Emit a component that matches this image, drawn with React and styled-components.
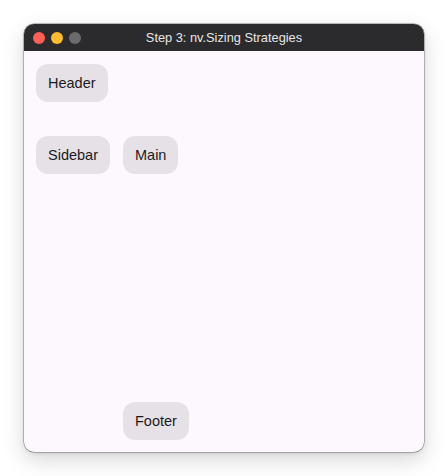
import React from "react";
import styled, { createGlobalStyle } from "styled-components";

const Global = createGlobalStyle`
  html, body { margin: 0; padding: 0; background: #ffffff; }
  body { font-family: "Liberation Sans", Arial, sans-serif; }
`;

const Stage = styled.div`
  width: 448px;
  height: 476px;
  padding: 24px;
  box-sizing: border-box;
  background: #ffffff;
`;

const Window = styled.div`
  width: 400px;
  height: 428px;
  border-radius: 10px;
  overflow: hidden;
  display: flex;
  flex-direction: column;
  background: #fcf8fd;
  box-shadow: 0 0 0 0.5px rgba(0,0,0,0.45), 0 8px 22px rgba(0,0,0,0.16), 0 1px 4px rgba(0,0,0,0.12);
`;

const TitleBar = styled.div`
  height: 27px;
  flex: none;
  background: #2b2b2d;
  display: flex;
  align-items: center;
  position: relative;
  padding-left: 9px;
  gap: 6px;
`;

const Dot = styled.span`
  width: 12px;
  height: 12px;
  border-radius: 50%;
  background: ${(p) => p.$color};
`;

const Title = styled.div`
  position: absolute;
  left: 0;
  right: 0;
  top: 0;
  bottom: 0;
  display: flex;
  align-items: center;
  justify-content: center;
  color: #e6e6e6;
  font-size: 12.8px;
  pointer-events: none;
`;

const Content = styled.div`
  flex: 1;
  padding: 13px 12px 12px;
  display: grid;
  grid-template-columns: 75px 1fr;
  grid-template-rows: 60px 1fr 38px;
  column-gap: 12px;
  row-gap: 12px;
  align-items: start;
  justify-items: start;
`;

const Chip = styled.div`
  grid-column: ${(p) => p.$col};
  grid-row: ${(p) => p.$row};
  height: 37.5px;
  padding: 0 12px;
  box-sizing: border-box;
  display: flex;
  align-items: center;
  background: #e6e1e7;
  border-radius: 12px;
  color: #1b1b1f;
  font-size: 14.5px;
`;

export default function App() {
  return (
    <>
      <Global />
      <Stage>
        <Window>
          <TitleBar>
            <Dot $color="#fe5f57" />
            <Dot $color="#febc2e" />
            <Dot $color="#6b6b6d" />
            <Title>Step 3: nv.Sizing Strategies</Title>
          </TitleBar>
          <Content>
            <Chip $col="1" $row="1">Header</Chip>
            <Chip $col="1" $row="2">Sidebar</Chip>
            <Chip $col="2" $row="2">Main</Chip>
            <Chip $col="2" $row="3">Footer</Chip>
          </Content>
        </Window>
      </Stage>
    </>
  );
}
